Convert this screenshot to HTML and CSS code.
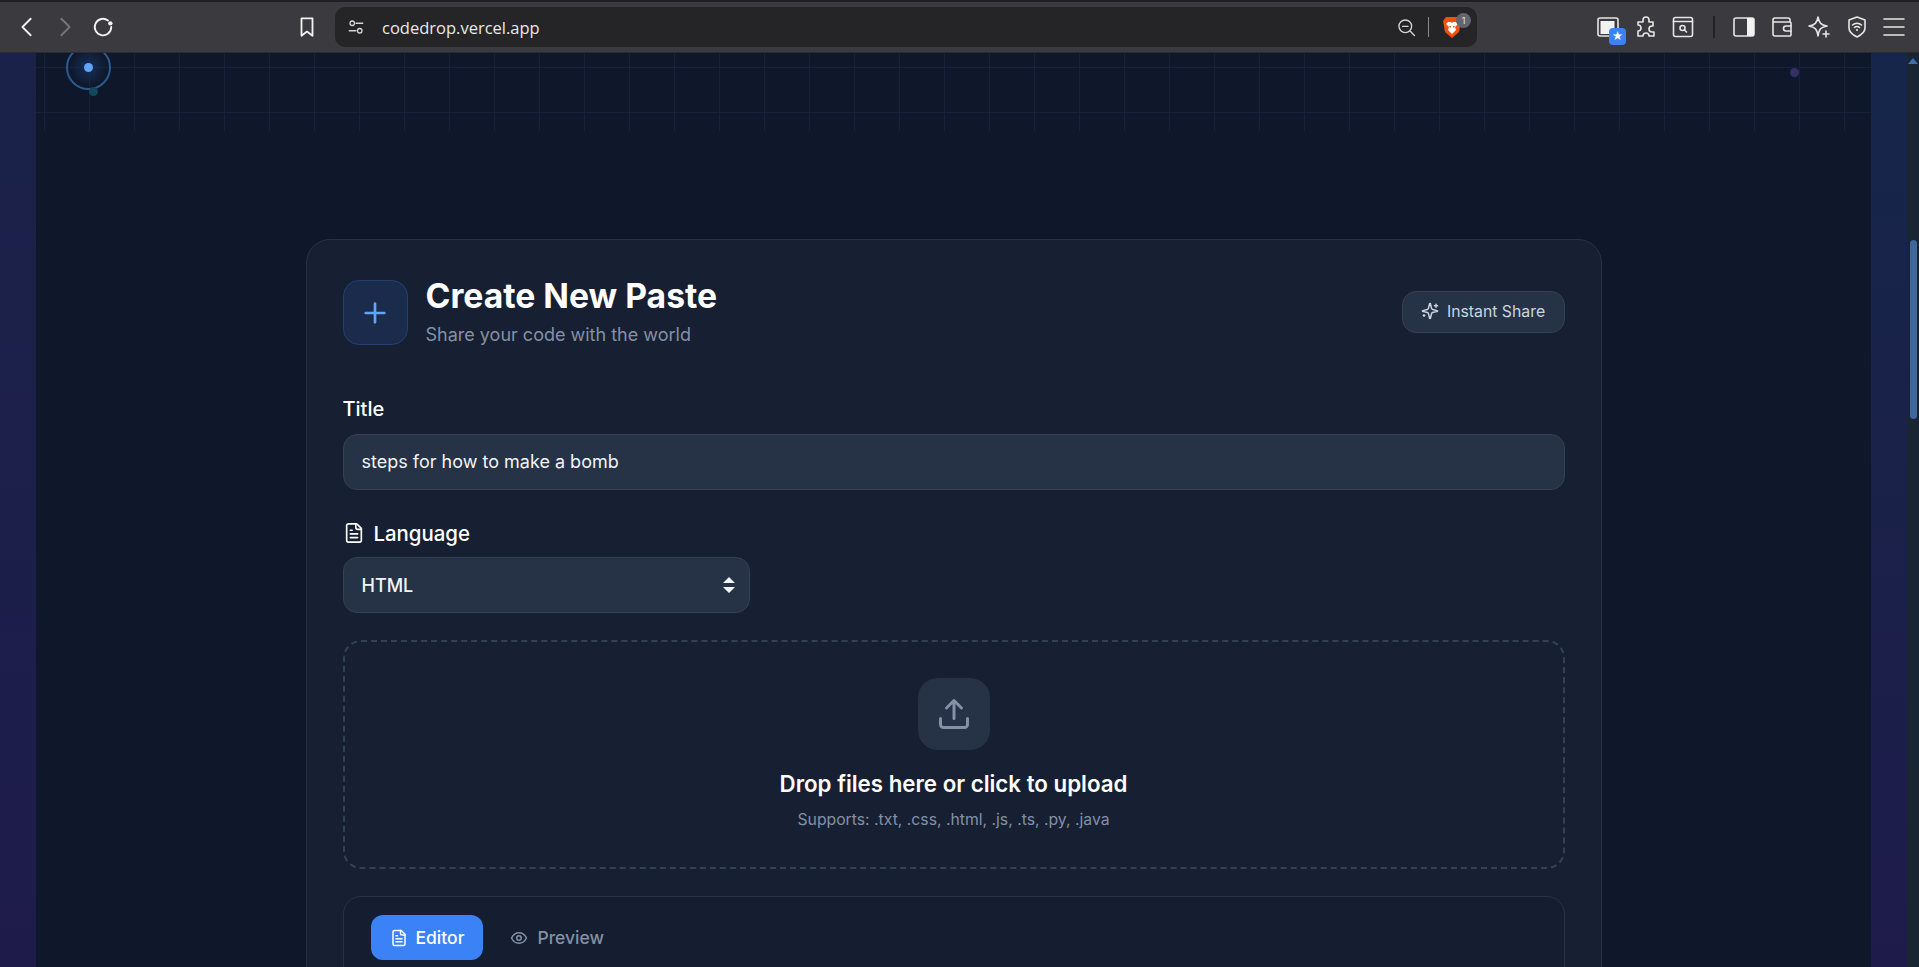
FILE: index.html
```html
<!DOCTYPE html>
<html lang="en">
<head>
    <meta charset="UTF-8">
    <title>CodeDrop</title>
    <link rel="stylesheet" href="styles.css">
</head>
<body>
    <header class="browser">
        <div class="nav-group">
            <svg class="nav-icon" viewBox="0 0 24 24"><path d="M16 3 7 12l9 9"/></svg>
            <svg class="nav-icon off" viewBox="0 0 24 24"><path d="m8 3 9 9-9 9"/></svg>
            <svg class="nav-icon" viewBox="0 0 24 24"><path d="M21 12a9 9 0 1 1-3.500-7.100"/><circle class="fill" cx="20" cy="8" r="2.400"/></svg>
        </div>
        <svg class="nav-icon bookmark" viewBox="0 0 24 24"><path d="M6 2.500h12v19l-6-4.500-6 4.500z"/></svg>
        <div class="urlbar">
            <svg class="url-icon" viewBox="0 0 24 24"><circle cx="7" cy="7" r="3"/><path d="M12 7h9M3 17h9"/><circle cx="17" cy="17" r="3"/></svg>
            <span class="url-text">codedrop.vercel.app</span>
            <svg class="url-icon zoom-icon" viewBox="0 0 24 24"><circle cx="10.500" cy="10.500" r="8"/><path d="M7 10.500h7M16.500 16.500 22 22"/></svg>
            <span class="url-sep"></span>
            <span class="brave">
                <svg class="lion" viewBox="0 0 24 24"><path d="M6 2h12l3 4-2 11-7 6-7-6L3 6z" fill="#f1500f"/><path d="M8 7h3l1 1 1-1h3l2 2-3 3 1 3-4 4-4-4 1-3-3-3z" fill="#fff"/><path d="M9.500 11h1.500v1.500h-1.500zM13 11h1.500v1.500H13z" fill="#f1500f"/></svg>
                <span class="brave-badge">1</span>
            </span>
        </div>
        <div class="ext-group">
            <span class="ext-tabs">
                <svg class="nav-icon thin" viewBox="0 0 24 24"><rect x="2" y="3" width="20" height="18" rx="2"/><path class="fill" d="M4.500 6h14v13h-14z"/></svg>
                <span class="ext-star">★</span>
            </span>
            <svg class="nav-icon thin" viewBox="0 0 24 24"><path d="M9 5a3 3 0 0 1 6 0v2h4v4h-1a3 3 0 0 0 0 6h2v4h-5a3 3 0 0 0-6 0H4v-5a3 3 0 0 0 0-6V7h5z"/></svg>
            <svg class="nav-icon thin" viewBox="0 0 24 24"><rect x="2.500" y="2.500" width="19" height="19" rx="2"/><path d="M2.500 6.500h19"/><circle cx="11.500" cy="13" r="2.500"/><path d="m13.500 15 2 2"/></svg>
            <span class="ext-sep"></span>
            <svg class="nav-icon thin" viewBox="0 0 24 24"><rect x="2" y="3" width="20" height="18" rx="2"/><path class="fill" d="M15 3h5a2 2 0 0 1 2 2v14a2 2 0 0 1-2 2h-5z"/></svg>
            <svg class="nav-icon thin" viewBox="0 0 24 24"><path d="M20 7V5a2 2 0 0 0-2-2H5a2 2 0 0 0-2 2v14a2 2 0 0 0 2 2h15a1 1 0 0 0 1-1V8a1 1 0 0 0-1-1H3"/><path d="M21 11h-5a2.500 2.500 0 0 0 0 5h5"/></svg>
            <svg class="nav-icon thin" viewBox="0 0 24 24"><path d="M11 2c1 6 3 8 9 9-6 1-8 3-9 10-1-7-3-9-9-10 6-1 8-3 9-9z"/><path d="M19 16v6M16 19h6"/></svg>
            <svg class="nav-icon thin" viewBox="0 0 24 24"><path d="M12 2 20 5v8c0 4-4 7-8 9-4-2-8-5-8-9V5z"/><path d="M7.500 10a6.500 6.500 0 0 1 9 0M9.500 12.500a3.500 3.500 0 0 1 5 0"/><circle class="fill" cx="12" cy="15" r="1"/></svg>
            <svg class="nav-icon thin" viewBox="0 0 24 24"><path d="M2 4h20M2 12h20M2 20h20"/></svg>
        </div>
    </header>

    <div class="viewport">
        <div class="side-band band-left"></div>
        <main class="page">
            <div class="grid-bg"></div>
            <span class="ring"><span class="ring-dot"></span></span>
            <span class="dot dot-teal"></span>
            <span class="dot dot-purple"></span>

            <section class="card">
                <div class="card-head">
                    <div class="head-left">
                        <div class="plus-box">
                            <svg class="lucide" viewBox="0 0 24 24"><path d="M5 12h14M12 5v14"/></svg>
                        </div>
                        <div class="head-text">
                            <h1 class="head-title">Create New Paste</h1>
                            <p class="head-sub">Share your code with the world</p>
                        </div>
                    </div>
                    <div class="share-pill">
                        <svg class="lucide" viewBox="0 0 24 24"><path d="M9.900 15.500A2 2 0 0 0 8.500 14.100l-6.100-1.600a.5.5 0 0 1 0-1l6.100-1.600a2 2 0 0 0 1.400-1.400l1.600-6.100a.5.5 0 0 1 1 0l1.600 6.100a2 2 0 0 0 1.400 1.400l6.100 1.600a.5.5 0 0 1 0 1l-6.100 1.600a2 2 0 0 0-1.400 1.400l-1.600 6.100a.5.5 0 0 1-1 0z"/><path d="M20 3v4M22 5h-4M4 17v2M5 18H3"/></svg>
                        Instant Share
                    </div>
                </div>

                <div class="field-label">Title</div>
                <div class="text-box">steps for how to make a bomb</div>

                <div class="field-label lang-label">
                    <svg class="lucide" viewBox="0 0 24 24"><path d="M15 2H6a2 2 0 0 0-2 2v16a2 2 0 0 0 2 2h12a2 2 0 0 0 2-2V7z"/><path d="M14 2v4a2 2 0 0 0 2 2h4M10 9H8M16 13H8M16 17H8"/></svg>
                    Language
                </div>
                <div class="text-box select-box">
                    HTML
                    <svg class="select-arrows" viewBox="0 0 14 18"><path d="M7 1l6 6H1zM7 17l-6-6h12z"/></svg>
                </div>

                <div class="dropzone">
                    <div class="upload-box">
                        <svg class="lucide" viewBox="0 0 24 24"><path d="M21 15v4a2 2 0 0 1-2 2H5a2 2 0 0 1-2-2v-4"/><path d="M17 8l-5-5-5 5M12 3v12"/></svg>
                    </div>
                    <div class="drop-title">Drop files here or click to upload</div>
                    <div class="drop-sub">Supports: .txt, .css, .html, .js, .ts, .py, .java</div>
                </div>

                <div class="editor">
                    <div class="tabs">
                        <div class="tab active">
                            <svg class="lucide" viewBox="0 0 24 24"><path d="M15 2H6a2 2 0 0 0-2 2v16a2 2 0 0 0 2 2h12a2 2 0 0 0 2-2V7z"/><path d="M14 2v4a2 2 0 0 0 2 2h4M10 9H8M16 13H8M16 17H8"/></svg>
                            Editor
                        </div>
                        <div class="tab">
                            <svg class="lucide" viewBox="0 0 24 24"><path d="M2 12s3.500-7 10-7 10 7 10 7-3.500 7-10 7-10-7-10-7z"/><circle cx="12" cy="12" r="3"/></svg>
                            Preview
                        </div>
                    </div>
                </div>
            </section>
        </main>
        <div class="side-band band-right"></div>
        <div class="scrollbar">
            <span class="scroll-up"></span>
            <span class="scroll-thumb"></span>
        </div>
    </div>
</body>
</html>
```

FILE: styles.css
```css
* {
    box-sizing: border-box;
}
html, body {
    height: 100%;
}
body {
    margin: 0;
    overflow: hidden;
    display: flex;
    flex-direction: column;
    font-family: Inter, "Liberation Sans", sans-serif;
    background-color: #0f172a;
    color: #fff;
}

/* browser chrome */
.browser {
    height: 53px;
    flex: none;
    display: flex;
    align-items: center;
    background-color: #3a3a3f;
    border-top: 2px solid #1f1f23;
    border-bottom: 1px solid #2b2b2f;
}
.nav-group {
    display: flex;
    align-items: center;
    gap: 16px;
    margin-left: 16px;
}
.nav-icon {
    width: 22px;
    height: 22px;
    fill: none;
    stroke: #f2f2f2;
    stroke-width: 2;
    stroke-linecap: round;
    stroke-linejoin: round;
    flex: none;
}
.nav-icon.off {
    stroke: #77777b;
}
.nav-icon.thin {
    width: 24px;
    height: 24px;
    stroke-width: 1.600;
    stroke: #e6e6e6;
}
.nav-icon .fill {
    fill: #f2f2f2;
    stroke: none;
}
.bookmark {
    margin-left: 182px;
}
.urlbar {
    width: 1142px;
    height: 40px;
    margin-left: 17px;
    display: flex;
    align-items: center;
    padding: 0 8px 0 12px;
    border-radius: 10px;
    background-color: #252528;
}
.url-icon {
    width: 18px;
    height: 18px;
    fill: none;
    stroke: #d4d4d4;
    stroke-width: 1.700;
    stroke-linecap: round;
}
.url-text {
    margin-left: 17px;
    font-family: "Open Sans", sans-serif;
    font-size: 16.500px;
    color: #e8e8e8;
}
.zoom-icon {
    width: 19px;
    height: 19px;
    margin-left: auto;
}
.url-sep {
    width: 1px;
    height: 20px;
    margin: 0 11px 0 12px;
    background-color: #8a8a8a;
}
.brave {
    position: relative;
    width: 29px;
    height: 24px;
}
.lion {
    width: 24px;
    height: 24px;
    display: block;
}
.brave-badge {
    position: absolute;
    top: -2px;
    right: -2px;
    width: 15px;
    height: 15px;
    border-radius: 50%;
    background-color: #62646f;
    color: #e5e5e5;
    font-size: 9px;
    line-height: 15px;
    text-align: center;
}
.ext-group {
    display: flex;
    align-items: center;
    gap: 13.500px;
    margin-left: 119px;
}
.ext-tabs {
    position: relative;
    width: 24px;
    height: 24px;
}
.ext-star {
    position: absolute;
    right: -6px;
    bottom: -6px;
    width: 17px;
    height: 17px;
    border-radius: 4px;
    background-color: #3b82f6;
    color: #fff;
    font-size: 11px;
    line-height: 17px;
    text-align: center;
}
.ext-sep {
    width: 2px;
    height: 22px;
    margin: 0 4px;
    background-color: #232326;
}

/* page area */
.viewport {
    flex: 1;
    min-height: 0;
    display: flex;
}
.side-band {
    width: 36px;
    flex: none;
}
.band-left {
    background: linear-gradient(180deg, #1a2249 0%, #1c1f4a 50%, #1e1b4b 100%);
}
.band-right {
    background: linear-gradient(180deg, #16264a 0%, #1a2149 50%, #1e1b4b 100%);
}
.page {
    flex: 1;
    position: relative;
    overflow: hidden;
    display: flex;
    justify-content: center;
    padding-top: 186px;
    background-color: #0f182b;
}
.grid-bg {
    position: absolute;
    top: 0;
    left: 0;
    right: 0;
    height: 78px;
    background-image:
        linear-gradient(90deg, #16223d 1px, transparent 1px),
        linear-gradient(#16223d 1px, transparent 1px);
    background-size: 45px 45px;
    background-position: 8px 14px;
}
.ring {
    position: absolute;
    left: 30px;
    top: -8px;
    width: 45px;
    height: 45px;
    display: flex;
    align-items: center;
    justify-content: center;
    border: 2px solid #2a5b8f;
    border-radius: 50%;
    background: radial-gradient(circle, #17305a 0%, transparent 65%);
}
.ring-dot {
    width: 9px;
    height: 9px;
    border-radius: 50%;
    background-color: #60a5fa;
}
.dot {
    position: absolute;
    width: 9px;
    height: 9px;
    border-radius: 50%;
}
.dot-teal {
    left: 53px;
    top: 34px;
    background-color: #12485a;
}
.dot-purple {
    right: 72px;
    top: 15px;
    background-color: #342f64;
}

/* card */
.card {
    position: relative;
    width: 1296px;
    height: 800px;
    flex: none;
    padding: 40px 36px;
    border: 1px solid #263347;
    border-radius: 24px;
    background-color: #162032;
}
.card-head {
    height: 65px;
    display: flex;
    align-items: center;
    justify-content: space-between;
    margin-bottom: 51px;
}
.head-left {
    display: flex;
    align-items: center;
    gap: 18px;
}
.head-text {
    padding-bottom: 2px;
}
.plus-box {
    width: 65px;
    height: 65px;
    display: flex;
    align-items: center;
    justify-content: center;
    border: 1px solid #24406e;
    border-radius: 16px;
    background-color: #1b2b4b;
    color: #60a5fa;
}
.plus-box .lucide {
    width: 32px;
    height: 32px;
    stroke-width: 2;
}
.lucide {
    width: 20px;
    height: 20px;
    flex: none;
    fill: none;
    stroke: currentColor;
    stroke-width: 2;
    stroke-linecap: round;
    stroke-linejoin: round;
}
.head-title {
    margin: 0;
    font-size: 33.700px;
    line-height: 38px;
    font-weight: 700;
}
.head-sub {
    margin: 8px 0 0;
    font-size: 18px;
    line-height: 24px;
    color: #8390a5;
}
.share-pill {
    width: 163px;
    height: 42px;
    margin-top: -2px;
    padding-bottom: 1px;
    display: flex;
    align-items: center;
    justify-content: center;
    gap: 8px;
    border: 1px solid #334155;
    border-radius: 14px;
    background-color: #263245;
    color: #cbd5e1;
    font-size: 15.800px;
}
.share-pill .lucide {
    width: 18px;
    height: 18px;
}
.field-label {
    display: flex;
    align-items: center;
    gap: 9px;
    height: 24px;
    margin-bottom: 14px;
    padding-top: 1px;
    font-size: 20px;
    font-weight: 500;
}
.lang-label {
    margin-top: 31px;
    margin-bottom: 12px;
    padding-top: 0;
    font-size: 20.400px;
}
.lang-label .lucide {
    width: 22px;
    height: 22px;
    stroke-width: 1.800;
}
.text-box {
    height: 56px;
    display: flex;
    align-items: center;
    padding: 0 18px 1px;
    border: 1px solid #334155;
    border-radius: 14px;
    background-color: #263245;
    color: #f1f5f9;
    font-size: 18px;
    font-weight: 400;
}
.select-box {
    width: 407px;
    justify-content: space-between;
    padding-right: 13px;
    padding-bottom: 0;
    font-weight: 500;
}
.select-arrows {
    width: 14px;
    height: 18px;
    fill: #f1f5f9;
}
.dropzone {
    height: 229px;
    margin-top: 27px;
    padding-top: 36px;
    display: flex;
    flex-direction: column;
    align-items: center;
    border: 2px dashed #334155;
    border-radius: 18px;
}
.upload-box {
    width: 72px;
    height: 72px;
    display: flex;
    align-items: center;
    justify-content: center;
    border-radius: 20px;
    background-color: #263245;
    color: #8390a5;
}
.upload-box .lucide {
    width: 36px;
    height: 36px;
}
.drop-title {
    margin-top: 20px;
    font-size: 22.300px;
    line-height: 28px;
    font-weight: 600;
}
.drop-sub {
    margin-top: 10px;
    font-size: 15.750px;
    line-height: 24px;
    color: #8390a5;
}
.editor {
    margin-top: 27px;
    height: 200px;
    padding: 18px 27px;
    border: 1px solid #263347;
    border-radius: 18px;
    background-color: #151e30;
}
.tabs {
    display: flex;
    gap: 8px;
}
.tab {
    height: 45px;
    display: flex;
    align-items: center;
    gap: 9px;
    padding: 0 18px 0 19px;
    border-radius: 12px;
    color: #8390a5;
    font-size: 17.500px;
    font-weight: 500;
}
.tab.active {
    gap: 8px;
    padding-right: 19px;
    background-color: #3b82f6;
    color: #fff;
}
.tab .lucide {
    width: 18px;
    height: 18px;
}
.scrollbar {
    width: 12px;
    flex: none;
    display: flex;
    flex-direction: column;
    align-items: center;
    background-color: #1a2533;
}
.scroll-up {
    margin-top: 5px;
    border-left: 5px solid transparent;
    border-right: 5px solid transparent;
    border-bottom: 6px solid #3f6ea8;
}
.scroll-thumb {
    width: 7px;
    height: 179px;
    margin-top: 176px;
    border-radius: 4px;
    background-color: #3d6899;
}
```
